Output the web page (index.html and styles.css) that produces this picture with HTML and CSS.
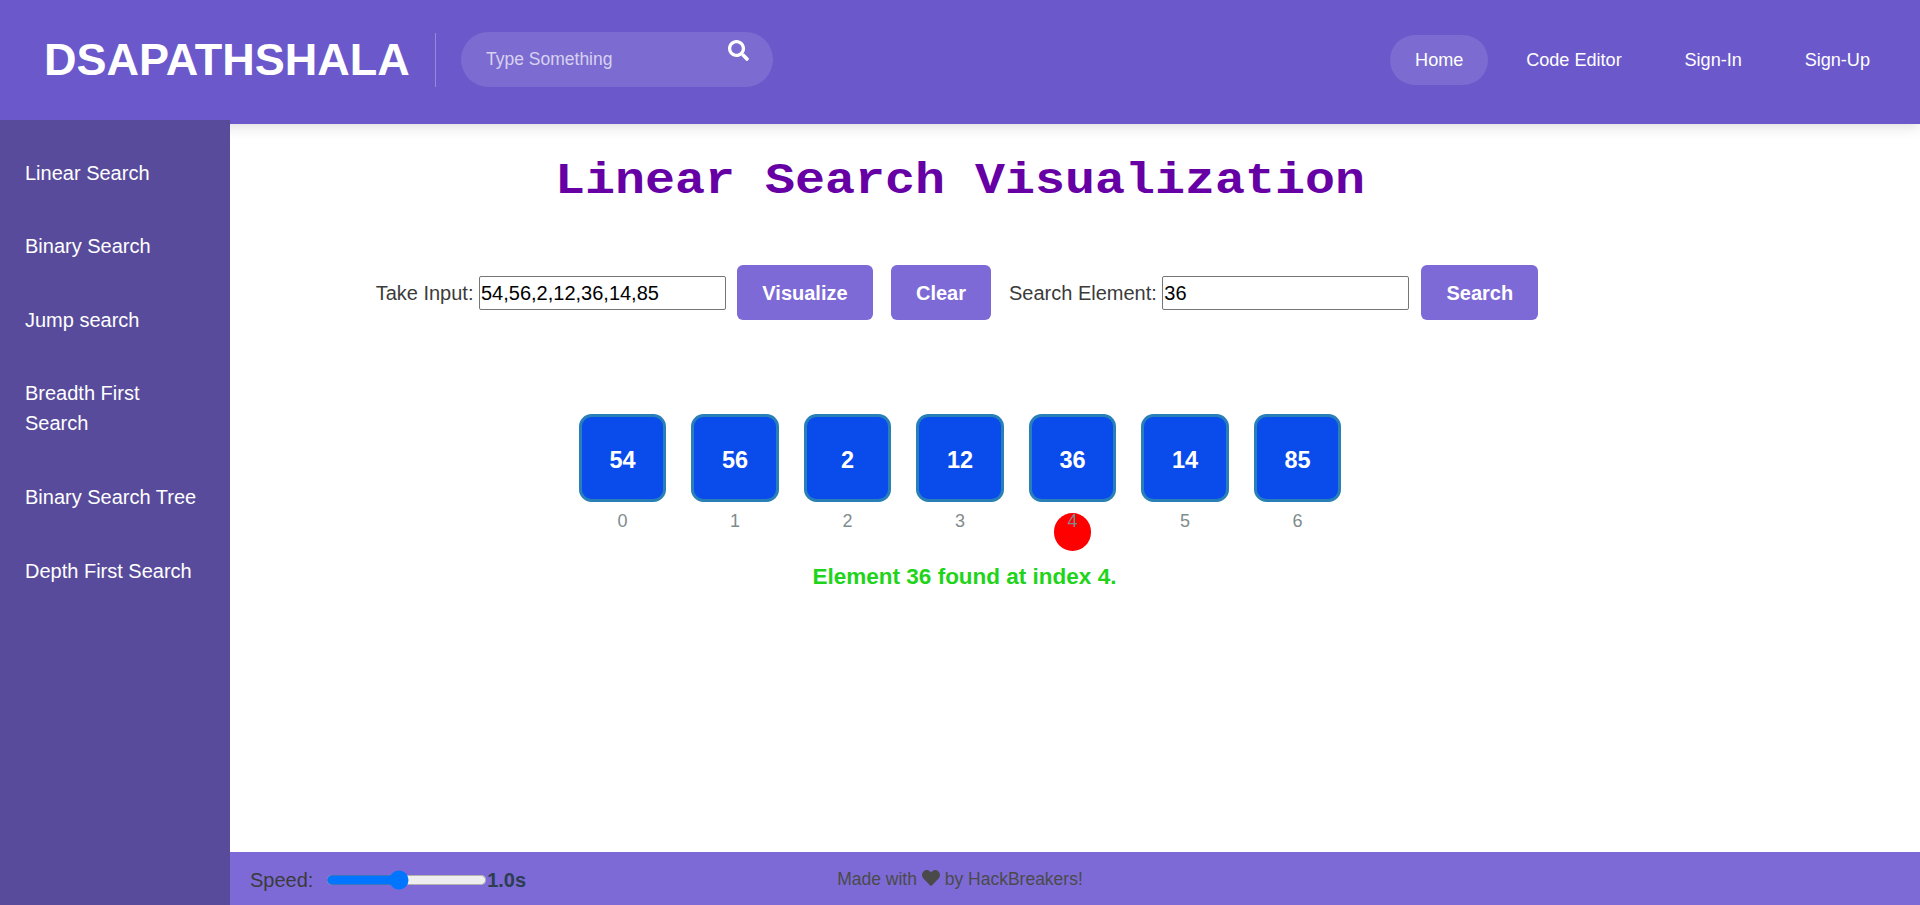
FILE: index.html
```html
<!DOCTYPE html>
<html lang="en">
<head>
<meta charset="utf-8">
<title>Linear Search Visualization</title>
<link rel="stylesheet" href="styles.css">
</head>
<body>
<header class="header">
  <a class="logo">DSAPATHSHALA</a>
  <form class="search">
    <input class="search-input" type="text" placeholder="Type Something">
    <svg class="search-icon" viewBox="0 0 512 512"><path fill="currentColor" d="M505 442.700 405.300 343c-4.500-4.500-10.600-7-17-7H372c27.600-35.300 44-79.700 44-128C416 93.100 322.900 0 208 0S0 93.100 0 208s93.100 208 208 208c48.300 0 92.700-16.400 128-44v16.300c0 6.400 2.500 12.500 7 17l99.700 99.700c9.400 9.400 24.600 9.400 33.900 0l28.300-28.300c9.400-9.400 9.400-24.600.1-34zM208 336c-70.700 0-128-57.200-128-128 0-70.700 57.200-128 128-128 70.700 0 128 57.200 128 128 0 70.700-57.200 128-128 128z"/></svg>
  </form>
  <nav class="nav">
    <a class="nav-link active">Home</a>
    <a class="nav-link">Code Editor</a>
    <a class="nav-link">Sign-In</a>
    <a class="nav-link">Sign-Up</a>
  </nav>
</header>
<div class="page">
  <aside class="sidebar">
    <a>Linear Search</a>
    <a>Binary Search</a>
    <a>Jump search</a>
    <a>Breadth First Search</a>
    <a>Binary Search Tree</a>
    <a>Depth First Search</a>
  </aside>
  <div class="content">
    <main class="main">
      <h1 class="title">Linear Search Visualization</h1>
      <div class="controls">
        <label for="values">Take Input:</label>
        <input class="field" id="values" type="text" value="54,56,2,12,36,14,85">
        <button class="btn visualize">Visualize</button>
        <button class="btn clear">Clear</button>
        <label for="element">Search Element:</label>
        <input class="field" id="element" type="text" value="36">
        <button class="btn find">Search</button>
      </div>
      <div class="array">
        <div class="item"><div class="box">54</div><span class="index">0</span></div>
        <div class="item"><div class="box">56</div><span class="index">1</span></div>
        <div class="item"><div class="box">2</div><span class="index">2</span></div>
        <div class="item"><div class="box">12</div><span class="index">3</span></div>
        <div class="item current"><div class="box">36</div><span class="index">4</span></div>
        <div class="item"><div class="box">14</div><span class="index">5</span></div>
        <div class="item"><div class="box">85</div><span class="index">6</span></div>
      </div>
      <p class="message">Element 36 found at index 4.</p>
    </main>
    <footer class="footer">
      <div class="speed">
        <label for="speed">Speed:</label>
        <input class="range" id="speed" type="range" min="0" max="100" value="45">
        <strong>1.0s</strong>
      </div>
      <p class="credit">Made with <svg class="heart" viewBox="0 0 512 512"><path fill="currentColor" d="M462.300 62.600C407.500 15.900 326 24.300 275.700 76.200L256 96.500l-19.700-20.300C186.100 24.300 104.500 15.900 49.700 62.600c-62.800 53.600-66.100 149.800-9.900 207.900l193.500 199.800c12.500 12.900 32.800 12.900 45.300 0l193.500-199.800c56.300-58.100 53-154.300-9.800-207.900z"/></svg> by HackBreakers!</p>
    </footer>
  </div>
</div>
</body>
</html>
```
FILE: styles.css
```css
* { box-sizing: border-box; }

body {
  margin: 0;
  height: 905px;
  display: flex;
  flex-direction: column;
  overflow: hidden;
  background: #fff;
  color: #3b3b3b;
  font: 20px/30px "Liberation Sans", Arial, sans-serif;
}

.header {
  position: relative;
  z-index: 1;
  flex: none;
  display: flex;
  height: 124px;
  padding: 0 25px 0 44px;
  background: #6b59cc;
  box-shadow: 0 2px 13px rgba(0, 0, 0, 0.15);
  color: #fff;
}

.logo {
  width: 392px;
  height: 54px;
  margin-top: 33px;
  border-right: 1px solid rgba(250, 250, 250, 0.3);
  font-size: 45px;
  font-weight: 700;
  line-height: 53px;
}

.search {
  display: flex;
  width: 312px;
  height: 55px;
  margin: 32px 0 0 25px;
  padding: 0 24px 0 25px;
  border-radius: 28px;
  background: rgba(250, 250, 250, 0.12);
}

.search-input {
  flex: 1;
  min-width: 0;
  padding: 0 0 1px;
  border: 0;
  background: none;
  outline: 0;
  color: #fff;
  font: 17.5px "Liberation Sans", Arial, sans-serif;
}

.search-input::placeholder { color: rgba(255, 255, 255, 0.7); }

.search-icon {
  width: 21px;
  height: 21px;
  margin-top: 8px;
}

.nav {
  display: flex;
  gap: 12.8px;
  margin: 35px 0 0 auto;
}

.nav-link {
  height: 50px;
  padding: 0 25px;
  border-radius: 25px;
  font-size: 18.1px;
  line-height: 50px;
}

.nav-link.active { background: rgba(250, 250, 250, 0.12); }

.page {
  position: relative;
  z-index: 2;
  flex: 1;
  display: flex;
  margin-top: -4px;
}

.sidebar {
  display: flex;
  flex-direction: column;
  gap: 43.6px;
  width: 230px;
  padding: 37.7px 25px;
  background: #584b9b;
  color: #fff;
}

.content {
  flex: 1;
  display: flex;
  flex-direction: column;
  padding-top: 4px;
}

.main {
  flex: 1;
  display: flex;
  flex-direction: column;
  align-items: center;
  padding-right: 230px;
}

.title {
  margin: 25px 0 0;
  color: #6600a5;
  font: 700 50px/60px "Courier New", "Liberation Mono", monospace;
  transform: scaleY(0.9);
  transform-origin: 0 54px;
}

.controls {
  display: flex;
  align-items: center;
  height: 55px;
  margin: 56px 6px 0 0;
}

.field {
  width: 247px;
  height: 34px;
  margin-left: 5.5px;
  padding: 2px 1px 0;
  border: 1px solid #767676;
  border-radius: 2px;
  background: #fff;
  color: #000;
  font: 20px "Liberation Sans", Arial, sans-serif;
}

.btn {
  height: 55px;
  padding: 2px 0 0;
  border: 0;
  border-radius: 6px;
  background: #7d6ad7;
  color: #fff;
  font: 700 20px "Liberation Sans", Arial, sans-serif;
}

.visualize { width: 136px; margin-left: 11px; }
.clear { width: 100px; margin: 0 18px; }
.find { width: 117px; margin-left: 12px; }

.array {
  display: flex;
  gap: 25px;
  margin-top: 94px;
}

.item {
  position: relative;
  display: flex;
  flex-direction: column;
  align-items: center;
}

.box {
  width: 87.5px;
  height: 87.5px;
  border: 3px solid #2980b9;
  border-radius: 12.5px;
  background: #094beb;
  color: #fff;
  font-size: 23.5px;
  font-weight: 700;
  line-height: 86px;
  text-align: center;
}

.index {
  position: relative;
  margin-top: 5px;
  color: #7f8c8d;
  font-size: 18px;
  line-height: 28px;
}

/* Marker behind the index of the element being compared */
.current::before {
  content: "";
  position: absolute;
  top: 99px;
  left: 25px;
  width: 37.5px;
  height: 37.5px;
  border-radius: 50%;
  background: #f00;
}

.message {
  margin: 27px 0 0 9px;
  color: #20d41a;
  font-size: 22.5px;
  font-weight: 700;
}

.footer {
  display: grid;
  grid-template-columns: 500px 1fr 730px;
  align-items: center;
  height: 53px;
  background: #7d6ad7;
}

.speed {
  display: flex;
  align-items: center;
  padding: 2px 0 0 20px;
}

.speed strong { color: #2c3e50; }

.range {
  zoom: 1.25;
  width: 129px;
  margin: 0 0 0 10px;
}

.credit {
  grid-column: 2;
  margin: 0;
  color: #4a4a4a;
  font-size: 17.5px;
  text-align: center;
  white-space: nowrap;
}

.heart {
  width: 18px;
  height: 18px;
  vertical-align: -2px;
}
```
